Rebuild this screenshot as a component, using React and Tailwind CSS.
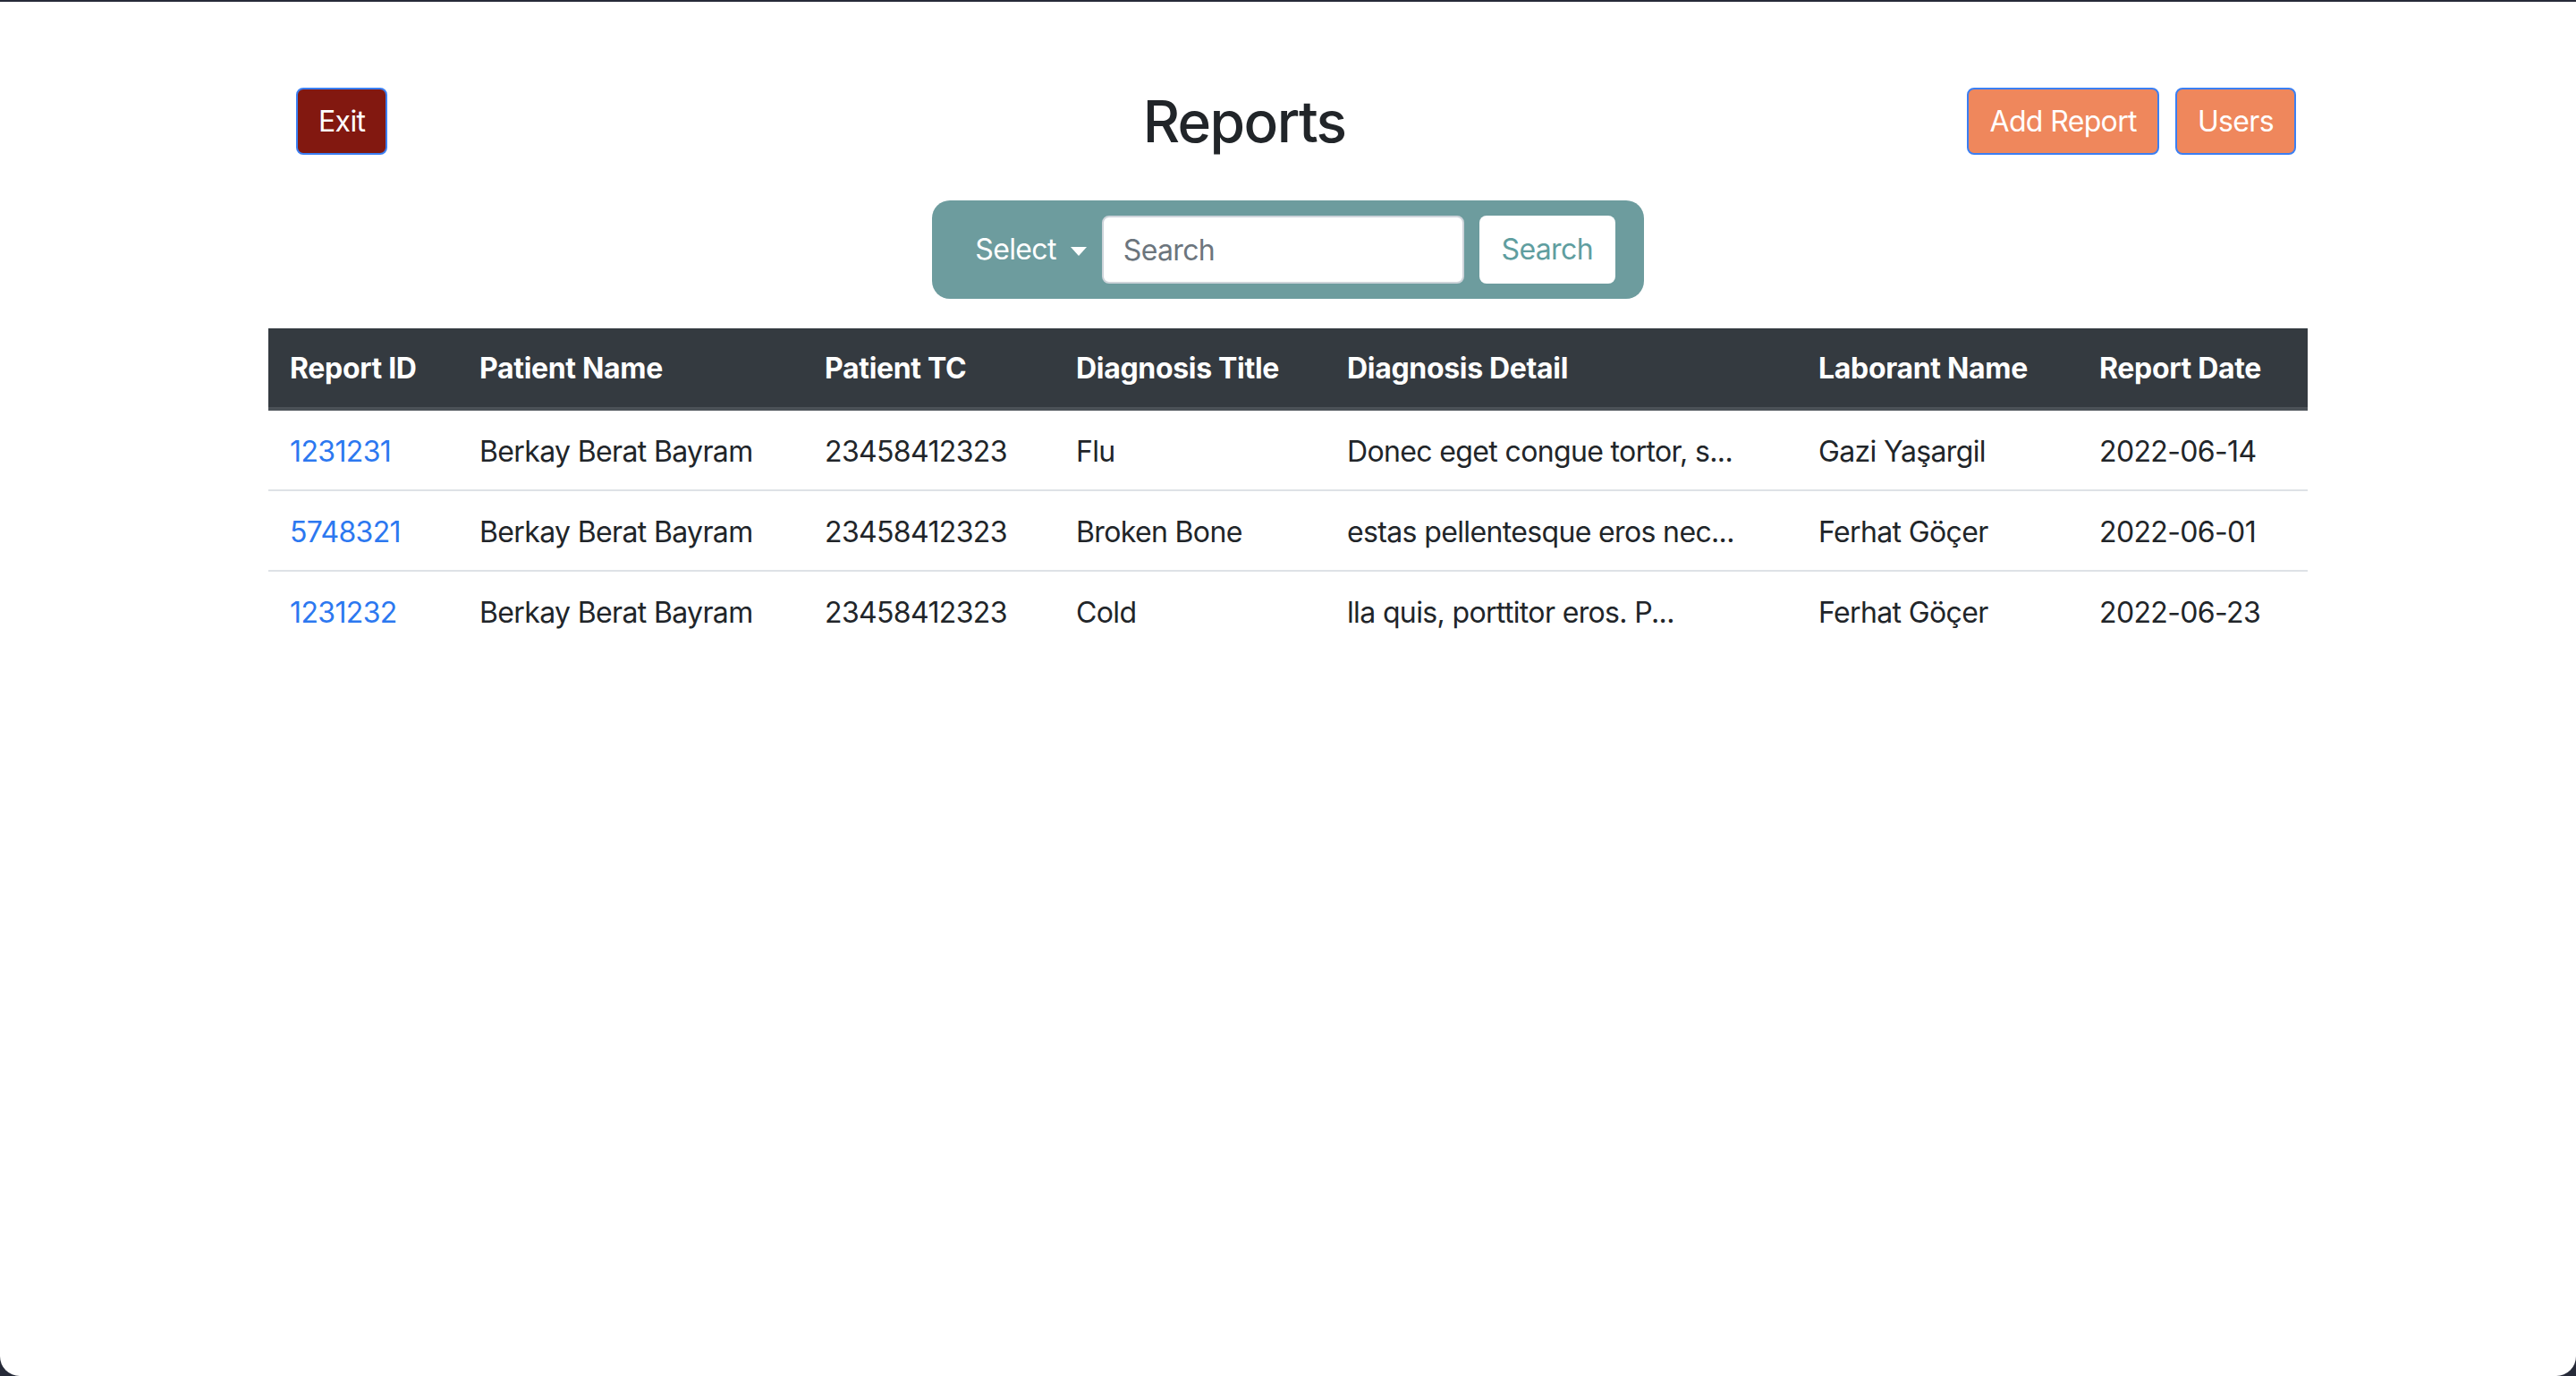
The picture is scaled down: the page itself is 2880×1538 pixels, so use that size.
const reports = [
  { id: "1231231", patient: "Berkay Berat Bayram", tc: "23458412323", title: "Flu", detail: "Donec eget congue tortor, s...", laborant: "Gazi Yaşargil", date: "2022-06-14" },
  { id: "5748321", patient: "Berkay Berat Bayram", tc: "23458412323", title: "Broken Bone", detail: "estas pellentesque eros nec...", laborant: "Ferhat Göçer", date: "2022-06-01" },
  { id: "1231232", patient: "Berkay Berat Bayram", tc: "23458412323", title: "Cold", detail: "lla quis, porttitor eros. P...", laborant: "Ferhat Göçer", date: "2022-06-23" },
];

const COLUMNS = [
  { label: "Report ID", width: "w-[212px]" },
  { label: "Patient Name", width: "w-[386px]" },
  { label: "Patient TC", width: "w-[281px]" },
  { label: "Diagnosis Title", width: "w-[303px]" },
  { label: "Diagnosis Detail", width: "w-[527px]" },
  { label: "Laborant Name", width: "w-[314px]" },
  { label: "Report Date", width: "w-[257px]" },
];

const font = "font-['Inter','Liberation_Sans',sans-serif]";
const btn = "h-[75px] px-[23px] rounded-[8px] border-2 border-[#3b7ff2] text-white text-[32px] leading-[48px] tracking-[-0.02em]";

export default function App() {
  return (
    <div className={`min-h-[1538px] w-full bg-[#262a38] pt-[2px] ${font}`}>
      <div className="h-[1536px] w-full bg-white rounded-b-[22px] text-[#212529]">
        {/* header row */}
        <div className="grid grid-cols-[764px_1254px_1fr] items-center pt-[95px]">
          <div className="pl-[331px]">
            <button className={`${btn} bg-[#821810]`}>Exit</button>
          </div>
          <h2 className="text-center text-[64px] leading-[77px] font-medium tracking-[-0.025em]">Reports</h2>
          <div className="flex justify-end gap-[18px] pr-[313px]">
            <button className={`${btn} bg-[#ef875c]`}>Add Report</button>
            <button className={`${btn} bg-[#ef875c]`}>Users</button>
          </div>
        </div>

        {/* search panel */}
        <div className="mt-[50px] flex justify-center">
          <div className="flex items-center rounded-[20px] bg-[#6d9c9e] pl-[48px] pr-[32px] py-[17px]">
            <button className="flex items-center text-white text-[32px] leading-[48px] tracking-[-0.02em]">
              Select
              <span className="ml-[16px] mt-[4px] h-0 w-0 border-x-[9px] border-t-[10px] border-x-transparent border-t-white" />
            </button>
            <input
              placeholder="Search"
              className="ml-[17px] h-[76px] w-[405px] rounded-[8px] border-2 border-[#ced4da] bg-white px-[22px] text-[32px] tracking-[-0.02em] text-[#212529] placeholder:text-[#6c757d] outline-none"
            />
            <button className="ml-[17px] h-[76px] w-[152px] rounded-[8px] bg-white text-[32px] tracking-[-0.02em] text-[#5f9ea0]">
              Search
            </button>
          </div>
        </div>

        {/* table */}
        <table className="mx-auto mt-[33px] w-[2280px] table-fixed border-separate border-spacing-0 text-[32px]">
          <thead>
            <tr className="bg-[#343a40] text-white">
              {COLUMNS.map((c) => (
                <th
                  key={c.label}
                  className={`${c.width} px-[24px] pt-[21px] pb-[19px] text-left font-bold leading-[48px] tracking-[-0.01em] border-b-4 border-[#4b5157]`}
                >
                  {c.label}
                </th>
              ))}
            </tr>
          </thead>
          <tbody className="tracking-[-0.02em]">
            {reports.map((r, i) => {
              const cell = `px-[24px] pt-[22px] pb-[18px] leading-[48px] whitespace-nowrap ${
                i < reports.length - 1 ? "border-b-2 border-[#dee2e6]" : ""
              }`;
              return (
                <tr key={r.id}>
                  <td className={cell}>
                    <a href="#" className="text-[#2c78f0]">{r.id}</a>
                  </td>
                  <td className={cell}>{r.patient}</td>
                  <td className={cell}>{r.tc}</td>
                  <td className={cell}>{r.title}</td>
                  <td className={cell}>{r.detail}</td>
                  <td className={cell}>{r.laborant}</td>
                  <td className={cell}>{r.date}</td>
                </tr>
              );
            })}
          </tbody>
        </table>
      </div>
    </div>
  );
}
